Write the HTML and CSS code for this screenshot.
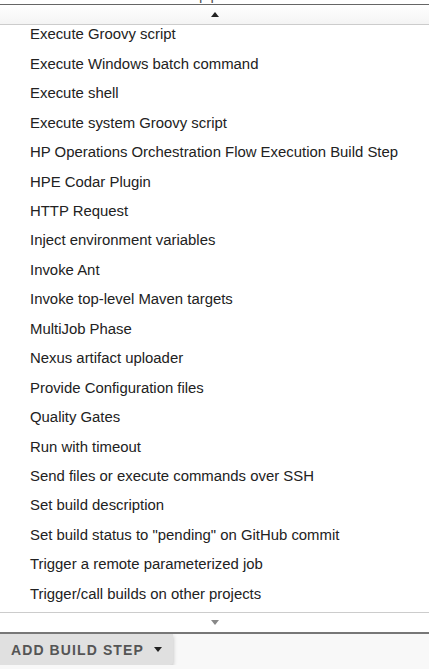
FILE: index.html
```html
<!DOCTYPE html>
<html lang="en">
<head>
    <meta charset="UTF-8">
    <meta name="viewport" content="width=device-width, initial-scale=1.0">
    <title>Add build step</title>
    <link rel="stylesheet" href="styles.css">
</head>
<body>

<div class="crumbs">
    <div class="crumbs-line">
        <span class="crumb">er</span>
        <span class="sep">&rsaquo;</span>
        <span class="crumb">es-coco-determiner-pipeline</span>
        <span class="sep">&rsaquo;</span>
    </div>
</div>

<div class="menu">
    <div class="scroll scroll-up"><span class="arrow-up"></span></div>
    <ul class="items">
        <li>Execute Groovy script</li>
        <li>Execute Windows batch command</li>
        <li>Execute shell</li>
        <li>Execute system Groovy script</li>
        <li>HP Operations Orchestration Flow Execution Build Step</li>
        <li>HPE Codar Plugin</li>
        <li>HTTP Request</li>
        <li>Inject environment variables</li>
        <li>Invoke Ant</li>
        <li>Invoke top-level Maven targets</li>
        <li>MultiJob Phase</li>
        <li>Nexus artifact uploader</li>
        <li>Provide Configuration files</li>
        <li>Quality Gates</li>
        <li>Run with timeout</li>
        <li>Send files or execute commands over SSH</li>
        <li>Set build description</li>
        <li>Set build status to "pending" on GitHub commit</li>
        <li>Trigger a remote parameterized job</li>
        <li>Trigger/call builds on other projects</li>
    </ul>
    <div class="scroll scroll-down"><span class="arrow-down"></span></div>
</div>

<button class="add-step">ADD BUILD STEP <span class="caret"></span></button>

</body>
</html>
```

FILE: styles.css
```css
body {
    font-family: Arial, "Liberation Sans", sans-serif;
    background-color: #f8f8f8;
    margin: 0;
    padding: 0;
}
.crumbs {
    height: 4px;
    overflow: hidden;
    background: #fff;
    border-bottom: 1px solid #666;
}
.crumbs-line {
    margin-top: -14px;
    margin-left: -6px;
    font-size: 15px;
    line-height: 17px;
    color: #555;
    white-space: nowrap;
}
.sep {
    margin: 0 22px;
    color: #aaa;
}
.menu {
    position: relative;
    height: 627px;
    overflow: hidden;
    background: #fff;
    border-bottom: 2px solid #777;
}
.scroll {
    position: absolute;
    left: 0;
    right: 0;
    height: 19px;
    display: flex;
    align-items: center;
    justify-content: center;
    z-index: 1;
}
.scroll-up {
    top: 0;
    background: linear-gradient(#fff, #f4f4f4);
    border-bottom: 1px solid #ccc;
}
.scroll-down {
    bottom: 0;
    background: #fff;
    border-top: 1px solid #ccc;
}
.arrow-up {
    width: 0;
    height: 0;
    border-left: 4px solid transparent;
    border-right: 4px solid transparent;
    border-bottom: 5px solid #222;
}
.arrow-down {
    width: 0;
    height: 0;
    border-left: 4px solid transparent;
    border-right: 4px solid transparent;
    border-top: 5px solid #888;
}
.items {
    list-style: none;
    margin: 0;
    padding: 15.4px 0 0 0;
}
.items li {
    height: 29.45px;
    line-height: 29.45px;
    padding-left: 30px;
    font-size: 14.9px;
    color: #222;
    white-space: nowrap;
}
.add-step {
    display: flex;
    align-items: center;
    gap: 10px;
    height: 31px;
    margin: 0;
    padding: 0 11px 0 11px;
    border: none;
    border-radius: 0 0 3px 0;
    background-color: #e0e0e0;
    box-shadow: 0 2px 4px rgba(0, 0, 0, 0.25);
    font-family: Arial, "Liberation Sans", sans-serif;
    font-weight: bold;
    font-size: 14px;
    letter-spacing: 1.1px;
    color: #555;
    cursor: pointer;
}
.caret {
    width: 0;
    height: 0;
    border-left: 4.5px solid transparent;
    border-right: 4.5px solid transparent;
    border-top: 5px solid #222;
}
```
